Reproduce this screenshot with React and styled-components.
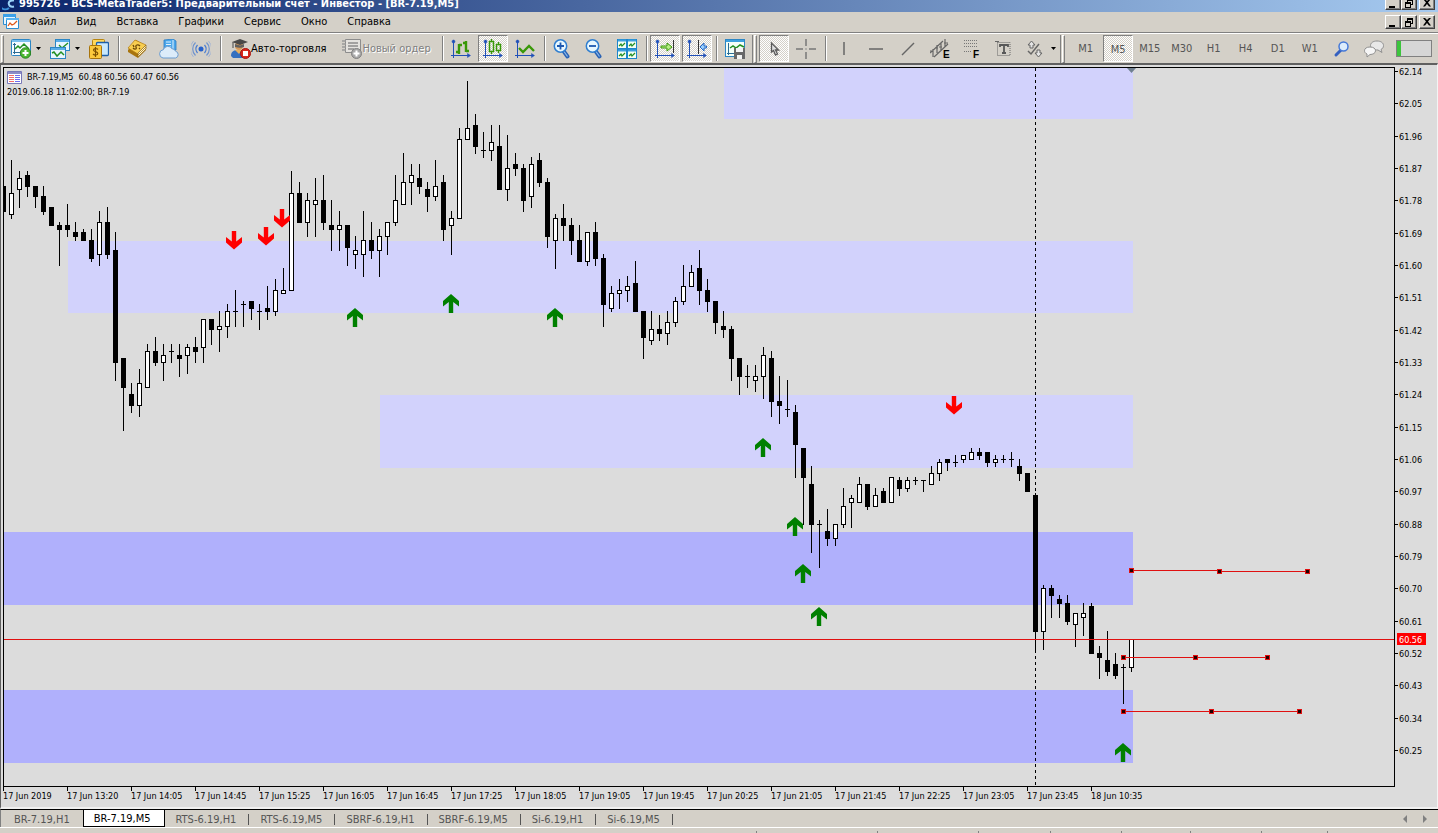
import React from 'react';
import styled, { createGlobalStyle, css } from 'styled-components';

const GlobalStyle = createGlobalStyle`
    * {
        box-sizing: border-box;
    }
    body {
        margin: 0;
        background: #d4d0c8;
        color: #000;
        font-family: 'DejaVu Sans Condensed', 'DejaVu Sans', sans-serif;
        font-size: 11px;
    }
    button {
        font: inherit;
        color: inherit;
    }
`;

const Page = styled.div`
    display: flex;
    flex-direction: column;
    min-height: 100vh;
`;

const TitleBar = styled.header`
    display: flex;
    align-items: flex-end;
    height: 12px;
    overflow: hidden;
    padding: 0 3px 0 2px;
    background: linear-gradient(to right, #0a246a, #a6caf0);
`;

const Title = styled.h1`
    flex: 1;
    margin: 0 0 0 3px;
    color: #fff;
    font-family: 'DejaVu Sans Condensed', 'DejaVu Sans', sans-serif;
    font-size: 11px;
    font-weight: bold;
    line-height: 16px;
    white-space: nowrap;
`;

const MenuBar = styled.nav`
    display: flex;
    align-items: center;
    height: 20px;
    padding: 0 3px;
`;

const MenuItem = styled.button`
    border: 0;
    padding: 0 10px;
    background: none;
    line-height: 18px;
`;

const MenuSpace = styled.div`
    flex: 1;
`;

const WindowButtons = styled.div`
    display: flex;
    margin-bottom: ${props => (props.$title ? '2px' : '0')};
`;

const WindowButton = styled.button`
    display: flex;
    width: 16px;
    height: 14px;
    margin-left: ${props => (props.$apart ? '2px' : '0')};
    padding: 0;
    border: 1px solid;
    border-color: #fff #404040 #404040 #fff;
    background: #d4d0c8;
    box-shadow: inset -1px -1px #808080;
`;

const Toolbar = styled.div`
    display: flex;
    align-items: center;
    height: 31px;
    border-top: 1px solid #808080;
    box-shadow: inset 0 1px #fff;
    padding-top: 1px;
`;

const Group = styled.div`
    display: flex;
    align-items: center;
    gap: 2px;
    height: 28px;
    padding: 0 2px 0 1px;
    border-right: 1px solid #808080;
    &:last-child {
        flex: 1;
        border-right: 0;
    }
`;

const Grip = styled.span`
    width: 3px;
    height: 28px;
    margin-right: ${props => (props.$wide ? '4px' : '0')};
    border: 1px solid;
    border-color: #fff #808080 #808080 #fff;
`;

const Separator = styled.span`
    width: 4px;
    height: 25px;
    border-right: 1px solid #fff;
    box-shadow: inset -1px 0 #808080;
`;

const ToolButton = styled.button`
    display: flex;
    align-items: center;
    justify-content: center;
    width: 30px;
    height: 27px;
    padding: 0;
    border: 1px solid transparent;
    background: none;
    color: #555;
    ${props => props.$pressed && css`
        padding: 1px 0 0 1px;
        border-color: #808080 #fff #fff #808080;
        background: repeating-conic-gradient(#fff 0 25%, #d4d0c8 0 50%) 0 0 / 2px 2px;
    `}
`;

const DropButton = styled(ToolButton)`
    width: 37px;
    justify-content: flex-start;
    padding-left: 4px;
    gap: 5px;
`;

const TextButton = styled(ToolButton)`
    width: auto;
    padding: 0 6px;
    color: #000;
    white-space: nowrap;
    &:disabled {
        color: #808080;
        text-shadow: 1px 1px #fff;
    }
`;

const Meter = styled.progress`
    appearance: none;
    width: 36px;
    height: 17px;
    margin-left: 5px;
    border: 1px solid #808080;
    background: #d6d6d6;
    &::-webkit-progress-bar {
        background: #d6d6d6;
    }
    &::-webkit-progress-value {
        background: #3cc43c;
    }
`;

const ChartWindow = styled.main`
    flex: 1;
    display: grid;
    grid-template-columns: minmax(0, 1fr) 42px;
    grid-template-rows: minmax(0, 1fr) 20px;
    padding: 2px 0 0 2px;
    border-top: 2px solid #606060;
    border-left: 1px solid #606060;
    border-right: 1px solid #f4f4f4;
    border-bottom: 2px solid #f0f0f0;
    background: #dcdcdc;
`;

const Plot = styled.section`
    position: relative;
    display: flex;
    border: 1px solid #000;
`;

const Drawing = styled.svg`
    flex: 1;
    width: 100%;
    height: 100%;
    min-height: 718px;
    shape-rendering: crispEdges;
`;

const Legend = styled.div`
    position: absolute;
    top: 2px;
    left: 3px;
    font-size: 9px;
    line-height: 15px;
    white-space: pre;
`;

const LegendRow = styled.div`
    display: flex;
    align-items: center;
    gap: 5px;
`;

const PriceAxis = styled.svg`
    width: 100%;
    height: 100%;
    font-size: 9px;
    shape-rendering: crispEdges;
`;

const TimeAxis = styled.ol`
    display: flex;
    grid-column: 1 / 3;
    margin: 0;
    padding: 0;
    overflow: hidden;
    list-style: none;
    font-size: 9px;
`;

const TimeMark = styled.li`
    flex: 0 0 64px;
    line-height: 11px;
    white-space: nowrap;
    &::before {
        content: '';
        display: block;
        width: 1px;
        height: 4px;
        background: #000;
    }
`;

const TabBar = styled.nav`
    display: flex;
    height: 18px;
    padding-left: 2px;
    border-top: 1px solid #000;
    border-left: 1px solid #808080;
`;

const Tab = styled.button`
    display: flex;
    align-items: center;
    padding: 1px 0 0 11px;
    border: 0;
    background: none;
    color: #555;
    white-space: nowrap;
    &::after {
        content: '';
        width: 1px;
        height: 11px;
        margin-left: 12px;
        background: ${props => (props.$bare ? 'transparent' : '#555')};
    }
    ${props => props.$active && css`
        padding: 0 0 0 10px;
        border: 1px solid #000;
        border-top: 0;
        background: #fff;
        color: #000;
        &::after {
            background: transparent;
        }
    `}
`;

const TabScroll = styled.div`
    display: flex;
    align-items: center;
    gap: 16px;
    margin-left: auto;
    padding-right: 11px;
`;

const ScrollButton = styled.button`
    display: flex;
    padding: 0;
    border: 0;
    background: none;
`;

const StatusBar = styled.footer`
    display: flex;
    height: 6px;
    padding-top: 3px;
    border-top: 1px solid #fff;
`;

const StatusCell = styled.div`
    flex: ${props => (props.$first ? '1 1 auto' : `0 1 ${props.$size}px`)};
    border-right: 1px solid #808080;
    &:last-child {
        border-right: 0;
    }
`;

// high, body top, body bottom, low, kind (b - down, w - up, d - doji)
const candles = [
    [186, 186, 212, 212, 'b'], [160, 193, 215, 219, 'w'], [171, 178, 190, 208, 'w'], [171, 175, 187, 197, 'b'],
    [186, 186, 197, 208, 'b'], [186, 196, 212, 215, 'b'], [207, 207, 226, 226, 'b'], [222, 225, 230, 266, 'b'],
    [204, 225, 230, 237, 'b'], [222, 232, 237, 241, 'b'], [229, 232, 241, 241, 'b'], [229, 240, 259, 262, 'b'],
    [211, 222, 255, 266, 'w'], [207, 222, 255, 259, 'b'], [232, 250, 363, 381, 'b'], [358, 358, 388, 431, 'b'],
    [383, 394, 406, 413, 'b'], [369, 383, 406, 417, 'w'], [344, 351, 388, 388, 'w'], [337, 351, 363, 366, 'b'],
    [344, 355, 363, 381, 'w'], [344, 351, 352, 363, 'd'], [344, 355, 359, 377, 'b'], [344, 347, 356, 374, 'w'],
    [337, 347, 352, 363, 'b'], [319, 319, 348, 363, 'w'], [319, 319, 330, 345, 'b'], [311, 326, 330, 352, 'w'],
    [304, 311, 327, 338, 'w'], [290, 311, 312, 327, 'd'], [301, 304, 305, 327, 'd'], [301, 301, 309, 320, 'b'],
    [304, 311, 312, 330, 'd'], [286, 308, 312, 320, 'b'], [279, 290, 312, 316, 'w'], [268, 290, 294, 294, 'w'],
    [171, 193, 291, 291, 'w'], [182, 193, 223, 223, 'b'], [193, 200, 223, 237, 'w'], [178, 200, 205, 237, 'w'],
    [175, 200, 223, 230, 'b'], [200, 225, 230, 251, 'b'], [211, 225, 230, 251, 'w'], [225, 225, 248, 266, 'b'],
    [236, 250, 255, 269, 'w'], [211, 240, 255, 277, 'w'], [222, 240, 251, 259, 'b'], [229, 236, 251, 277, 'w'],
    [222, 222, 237, 255, 'w'], [175, 200, 223, 226, 'w'], [153, 182, 205, 205, 'w'], [164, 175, 183, 205, 'w'],
    [164, 178, 187, 194, 'b'], [182, 189, 197, 212, 'b'], [160, 186, 197, 201, 'w'], [175, 182, 230, 241, 'b'],
    [211, 218, 226, 255, 'w'], [128, 139, 219, 219, 'w'], [81, 128, 140, 140, 'w'], [114, 125, 147, 154, 'b'],
    [132, 150, 151, 158, 'd'], [125, 142, 151, 161, 'w'], [125, 146, 190, 190, 'b'], [135, 168, 190, 201, 'w'],
    [153, 164, 169, 176, 'b'], [164, 168, 201, 212, 'b'], [157, 164, 197, 208, 'w'], [153, 160, 183, 187, 'b'],
    [178, 182, 237, 248, 'b'], [214, 218, 241, 269, 'w'], [204, 218, 226, 241, 'b'], [218, 225, 241, 255, 'b'],
    [225, 240, 262, 262, 'b'], [232, 232, 262, 266, 'w'], [222, 232, 259, 266, 'b'], [254, 258, 305, 327, 'b'],
    [286, 293, 309, 312, 'w'], [279, 290, 294, 309, 'w'], [276, 286, 291, 302, 'w'], [261, 283, 312, 312, 'b'],
    [311, 311, 338, 359, 'b'], [311, 329, 341, 345, 'w'], [315, 329, 334, 341, 'b'], [311, 322, 334, 345, 'w'],
    [297, 301, 323, 327, 'w'], [265, 286, 302, 305, 'w'], [265, 272, 287, 287, 'w'], [250, 268, 291, 305, 'b'],
    [279, 290, 302, 312, 'b'], [301, 301, 323, 334, 'b'], [311, 326, 330, 338, 'b'], [326, 329, 359, 381, 'b'],
    [358, 358, 377, 395, 'b'], [365, 376, 377, 388, 'd'], [365, 376, 381, 392, 'w'], [347, 355, 377, 399, 'w'],
    [351, 358, 402, 417, 'b'], [376, 401, 406, 424, 'b'], [380, 409, 410, 417, 'd'], [405, 412, 445, 478, 'b'],
    [448, 448, 478, 525, 'b'], [466, 484, 525, 553, 'b'], [520, 524, 525, 568, 'd'], [509, 531, 539, 546, 'b'],
    [524, 524, 539, 546, 'w'], [488, 506, 525, 528, 'w'], [495, 498, 503, 528, 'w'], [477, 484, 503, 503, 'w'],
    [484, 484, 507, 510, 'b'], [488, 495, 507, 507, 'w'], [488, 491, 503, 503, 'b'], [477, 477, 503, 503, 'w'],
    [477, 480, 489, 496, 'b'], [477, 480, 489, 492, 'w'], [477, 480, 481, 485, 'd'], [480, 480, 481, 492, 'd'],
    [466, 473, 485, 485, 'w'], [459, 462, 474, 481, 'w'], [459, 459, 463, 471, 'b'], [455, 462, 463, 467, 'd'],
    [455, 455, 460, 463, 'w'], [448, 452, 460, 460, 'w'], [448, 452, 456, 460, 'b'], [452, 452, 463, 467, 'b'],
    [455, 459, 463, 467, 'w'], [455, 459, 460, 463, 'd'], [452, 459, 460, 467, 'd'], [459, 466, 474, 481, 'b'],
    [473, 473, 492, 492, 'b'], [493, 495, 632, 650, 'b'], [585, 588, 632, 650, 'w'], [585, 588, 596, 618, 'b'],
    [595, 599, 604, 618, 'b'], [595, 603, 622, 625, 'b'], [613, 613, 625, 647, 'w'], [603, 613, 618, 636, 'w'],
    [603, 606, 654, 654, 'b'], [646, 653, 658, 679, 'b'], [631, 660, 672, 676, 'b'], [653, 664, 676, 679, 'b'],
    [664, 667, 668, 704, 'd'], [639, 639, 668, 672, 'w'],
];

const zones = [
    { x: 724, y: 68, width: 409, height: 51, color: '#d2d2fc' },
    { x: 68, y: 241, width: 1065, height: 72, color: '#d2d2fc' },
    { x: 380, y: 395, width: 753, height: 73, color: '#d2d2fc' },
    { x: 4, y: 532, width: 1129, height: 73, color: '#b0b0fc' },
    { x: 4, y: 690, width: 1129, height: 73, color: '#b0b0fc' },
];

const sellArrows = [[226, 231], [258, 227], [274, 209], [946, 396]];
const buyArrows = [[347, 308], [443, 294], [547, 308], [755, 438], [787, 517], [795, 564], [811, 607], [1115, 743]];

const levels = [
    [[1131, 570], [1219, 571], [1307, 571]],
    [[1123, 657], [1195, 657], [1267, 657]],
    [[1123, 711], [1211, 711], [1299, 711]],
];

const times = [
    '17 Jun 2019', '17 Jun 13:20', '17 Jun 14:05', '17 Jun 14:45', '17 Jun 15:25', '17 Jun 16:05',
    '17 Jun 16:45', '17 Jun 17:25', '17 Jun 18:05', '17 Jun 19:05', '17 Jun 19:45', '17 Jun 20:25',
    '17 Jun 21:05', '17 Jun 21:45', '17 Jun 22:25', '17 Jun 23:05', '17 Jun 23:45', '18 Jun 10:35',
];

const prices = Array.from({ length: 22 }, (_, i) => ({
    label: (62.14 - i * 0.09).toFixed(2),
    y: Math.round(4 + i * 32.33),
}));

const menu = ['Файл', 'Вид', 'Вставка', 'Графики', 'Сервис', 'Окно', 'Справка'];
const frames = ['M1', 'M5', 'M15', 'M30', 'H1', 'H4', 'D1', 'W1'];
const tabs = [
    'BR-7.19,H1', 'BR-7.19,M5', 'RTS-6.19,H1', 'RTS-6.19,M5',
    'SBRF-6.19,H1', 'SBRF-6.19,M5', 'Si-6.19,H1', 'Si-6.19,M5',
];

const Icon = ({ size = 20, children }) => (
    <svg width={size} height={size} viewBox="0 0 20 20" fill="none" aria-hidden="true">{children}</svg>
);

const Caret = () => (
    <svg width="5" height="3" viewBox="0 0 5 3" aria-hidden="true"><path d="M0 0h5L2.5 3z" fill="#000" /></svg>
);

const Axes = () => (
    <g stroke="#2050b8" fill="#2050b8">
        <path d="M2.5 1v18M0 16.500h19" fill="none" />
        <path d="M1 2.500a1.500 1.500 0 0 1 3 0 1.500 1.500 0 0 1-3 0zM16.500 14.500l3 2-3 2z" strokeWidth="0.500" />
    </g>
);

const NewChartIcon = () => (
    <Icon>
        <rect x="0.500" y="0.500" width="19" height="16" rx="1" fill="#f6fcff" stroke="#2c86c4" />
        <path d="M1 1h18v2H1z" fill="#7cc0ee" />
        <path d="M3.500 4v11M2 13.500h14M2 5.500h3" stroke="#2d6d96" />
        <path d="M4 10l3-3 2 2 4-4 5 5" stroke="#239023" strokeWidth="1.500" />
        <circle cx="14.500" cy="14" r="5.200" fill="#4cb830" stroke="#2b8420" />
        <path d="M14.500 11v6M11.500 14h6" stroke="#fff" strokeWidth="2" />
    </Icon>
);

const ProfilesIcon = () => (
    <Icon>
        <rect x="5.500" y="0.500" width="14" height="11" fill="#e8f6fe" stroke="#2c86c4" />
        <path d="M6 1h13v2H6z" fill="#5aaee8" />
        <path d="M9 6l3 3 6-5" stroke="#239023" strokeWidth="1.300" />
        <rect x="0.500" y="8.500" width="15" height="11" fill="#e8f6fe" stroke="#2c86c4" />
        <path d="M1 9h14v2H1z" fill="#5aaee8" />
        <path d="M2 14l2-1 3 4 4-4 3 3" stroke="#239023" strokeWidth="1.500" />
    </Icon>
);

const SymbolsIcon = () => (
    <Icon>
        <rect x="3.500" y="0.500" width="12" height="12" rx="1" fill="#ffd75a" stroke="#b78512" />
        <rect x="7.500" y="3.500" width="12" height="13" rx="1" fill="#c8e8fc" stroke="#1d5fa8" strokeWidth="1.300" />
        <rect x="0.500" y="6.500" width="12" height="13" rx="1" fill="#fcc93c" stroke="#a8740c" />
        <path d="M9 10.500C7.500 8.800 4.300 9.500 4.500 11.300c.2 1.600 4.300 1.200 4.300 3.200 0 1.900-3.300 2-4.800.5M6.500 8v10" stroke="#7c5000" strokeWidth="1.200" />
    </Icon>
);

const MarketIcon = () => (
    <Icon>
        <path d="M1 11L9 1l10 6v4l-8 8-10-6z" fill="#a8740c" />
        <path d="M1 9L8 1l11 5-8 9z" fill="#f8ce50" stroke="#b07a10" strokeWidth="0.700" />
        <path d="M11 14l8-8v4l-8 8z" fill="#fff4c8" stroke="#8f6410" strokeWidth="0.700" />
        <path d="M11 16l8-8" stroke="#a8740c" strokeWidth="0.800" />
        <path d="M6 9c2 2 4 1 3-1s2-3 4-1M6 6l1 2M12 9l1 1" stroke="#6c4804" strokeWidth="1.300" />
    </Icon>
);

const CloudIcon = () => (
    <Icon>
        <path d="M5 1l9-1 3 2v9H5z" fill="#4ba6ea" stroke="#2a7cc4" strokeWidth="0.800" />
        <path d="M7 3h5M7 5.500h5M7 8h5M14 1v9" stroke="#dff2ff" />
        <path d="M4 19a4.200 4.200 0 0 1 .3-8.300 4.800 4.800 0 0 1 8.700-1 3.600 3.600 0 0 1 3.500 2.500 3.500 3.500 0 0 1 0 6.800z" fill="#dcecfa" stroke="#6a9cd0" />
    </Icon>
);

const SignalIcon = () => (
    <Icon>
        <circle cx="10" cy="10" r="2.500" fill="#2862cc" />
        <path d="M6.500 6a6 6 0 0 0 0 8M13.500 6a6 6 0 0 1 0 8" stroke="#4a7cd0" strokeWidth="1.300" />
        <path d="M4.500 3.500a9 9 0 0 0 0 13M15.500 3.500a9 9 0 0 1 0 13" stroke="#6f93ce" strokeWidth="1.200" />
        <path d="M2.500 2a11.500 11.500 0 0 0 0 16M17.500 2a11.500 11.500 0 0 1 0 16" stroke="#a3b4d4" />
    </Icon>
);

const AutoTradeIcon = () => (
    <Icon>
        <circle cx="8" cy="7" r="4" fill="#d89a58" />
        <path d="M0 17c0-5 3-6 8-6s7 2 7 8H2z" fill="#3470c0" />
        <path d="M4 11l4 4 3-4z" fill="#e8b060" />
        <path d="M1 3l8-3 8 3-8 3z" fill="#484848" />
        <path d="M4 5v3c3 1 7 1 9 0V5L9 6.500z" fill="#606060" />
        <path d="M2 3v6" stroke="#484848" />
        <circle cx="14.500" cy="14.500" r="5" fill="#d8261c" stroke="#a81410" />
        <rect x="12" y="12" width="5" height="5" fill="#fff" />
    </Icon>
);

const OrderIcon = () => (
    <Icon>
        <path d="M3.500 0.500h15v13h-15z" fill="#e4e2de" stroke="#8c8c8c" />
        <path d="M6 4h10M6 7h10M6 10h6" stroke="#8c8c8c" strokeWidth="1.300" />
        <path d="M0 2h4M0 5h4M0 8h4M0 11h4" stroke="#999" strokeWidth="1.500" />
        <circle cx="14.500" cy="14.500" r="5" fill="#a8a8a8" stroke="#808080" />
        <path d="M14.500 11.500v6M11.500 14.500h6" stroke="#fff" strokeWidth="2" />
    </Icon>
);

const BarsIcon = () => (
    <Icon><Axes /><path d="M8 5v10M5 13h3M8 6h3M15 2v11M12 4h3M15 12h3" stroke="#399808" strokeWidth="2.400" /></Icon>
);

const CandlesIcon = () => (
    <Icon>
        <Axes />
        <path d="M8.500 0v2M8.500 13v2M15.500 3v2M15.500 12v2" stroke="#399808" strokeWidth="1.300" />
        <path d="M6.500 2.500h4v10h-4zM13.500 5.500h4v6h-4z" stroke="#399808" strokeWidth="1.500" />
    </Icon>
);

const LineIcon = () => (
    <Icon><Axes /><path d="M4 9l4 4 6-6 5 5" stroke="#399808" strokeWidth="2.400" /></Icon>
);

const ZoomIcon = ({ plus }) => (
    <Icon>
        <path d="M10.500 12l4 5.500" stroke="#2a62b4" strokeWidth="4" strokeLinecap="round" />
        <path d="M11 12.500l3.500 5" stroke="#8cbcec" strokeWidth="1.200" />
        <circle cx="7.500" cy="7" r="6.200" fill="#e8f8ff" stroke="#2f7ed0" strokeWidth="1.500" />
        <path d={plus ? 'M4 7h7M7.500 3.500v7' : 'M4 7h7'} stroke="#1c58b0" strokeWidth="1.800" />
    </Icon>
);

const TileIcon = () => (
    <Icon>
        {[[0, 0], [10, 0], [0, 10], [10, 10]].map(([x, y]) => (
            <g key={`${x}-${y}`} transform={`translate(${x} ${y})`}>
                <rect x="0.500" y="0.500" width="9" height="9" fill="#f4fff4" stroke="#1c86cc" />
                <path d="M1 1.500h8" stroke="#3ca0e0" strokeWidth="2" />
                <path d="M2 7l2-2 1 2 3-3" stroke="#239023" strokeWidth="1.200" />
            </g>
        ))}
    </Icon>
);

const ScrollIcon = () => (
    <Icon>
        <Axes />
        <path d="M18.500 1v13" stroke="#333" />
        <path d="M6 7h6V4l5 4-5 4V9H6z" fill="#b8f088" stroke="#399808" />
    </Icon>
);

const ShiftIcon = () => (
    <Icon>
        <Axes />
        <path d="M11.500 1v14" stroke="#333" />
        <path d="M19.500 7H17V4l-4 4 4 4V9h2.500z" fill="#9cd0fc" stroke="#2466c4" />
    </Icon>
);

const TemplateIcon = () => (
    <Icon>
        <rect x="0.500" y="0.500" width="19" height="17" fill="#f4fff8" stroke="#2c86c4" />
        <path d="M1 2h18" stroke="#3ca0e0" strokeWidth="2" />
        <path d="M3.500 4v12M2 14.500h7" stroke="#2d6d96" />
        <path d="M5 9l3-2 3 2 4-3 4 2" stroke="#239023" strokeWidth="1.500" />
        <path d="M9 9h11v11H9z" fill="#686868" />
        <path d="M11 9h7v4h-7zM12 16h5v4h-5z" fill="#f4f4f4" />
    </Icon>
);

const CursorIcon = () => (
    <Icon><path d="M7.500 4v9l2-1.500 2 4.500 2-1-2-4h3z" fill="#e0e0e0" stroke="#585858" strokeWidth="1.300" /></Icon>
);

const CrossIcon = () => (
    <Icon><path d="M10 0v7M10 13v7M0 10h7M13 10h7M9.500 10h1" stroke="#777" strokeWidth="1.500" /></Icon>
);

const StrokeIcon = ({ d }) => (
    <Icon><path d={d} stroke="#666" strokeWidth="1.500" /></Icon>
);

const Letter = ({ x, y, children }) => (
    <text x={x} y={y} fill="#000" fontSize="10" fontWeight="bold" fontFamily="Liberation Sans, sans-serif">{children}</text>
);

const ChannelIcon = () => (
    <Icon>
        <path d="M0 14L13 2M4 18L18 5M3 10v8M7 6v8M11 4v8M15 0v8M0 12h3M5 9h3M9 8h3M14 4h4" stroke="#666" strokeWidth="1.200" />
        <Letter x="13" y="19">E</Letter>
    </Icon>
);

const FiboIcon = () => (
    <Icon>
        <path d="M2 1.500h13M2 4.500h13M2 7.500h13M2 12.500h8" stroke="#777" strokeDasharray="1 1" />
        <Letter x="11" y="19">F</Letter>
    </Icon>
);

const TextIcon = () => (
    <Icon>
        <path d="M3.500 3.500h12.500v13H3.500z" stroke="#666" strokeDasharray="1 1" />
        <path d="M1 2.500h4" stroke="#666" />
        <path d="M6 8V6h8v2M10 6v8M8 14h4" stroke="#585858" strokeWidth="1.800" />
    </Icon>
);

const ArrowsIcon = () => (
    <Icon>
        <path d="M2 6l3.500-4L9 6H7v3H4V6zM9 14l3.500 4 3.500-4h-2v-3h-3v3z" fill="#e4e4e4" stroke="#666" />
        <path d="M2 12l3 3L13 5" stroke="#666" strokeWidth="1.500" />
    </Icon>
);

const SearchIcon = () => (
    <Icon>
        <path d="M4 16l5-5" stroke="#3460c0" strokeWidth="3" strokeLinecap="round" />
        <circle cx="11.500" cy="7.500" r="4.500" fill="#dcecfc" stroke="#4478d8" strokeWidth="1.500" />
    </Icon>
);

const ChatIcon = () => (
    <Icon>
        <path d="M13 2c4 0 6.500 2 6.500 4.500 0 2-1 3.200-2.500 4l1 3-4-2.500c-4.500 0-7.500-2-7.500-4.500S9 2 13 2z" fill="#e8e8e8" stroke="#909090" />
        <path d="M6 8c3.500 0 5.500 1.500 5.500 3.800S9 15.500 6 15.500L3 18v-3C1.300 14.300.5 13 .5 11.800.5 9.500 2.500 8 6 8z" fill="#f6f6f6" stroke="#909090" />
    </Icon>
);

const ChildIcon = () => (
    <svg width="16" height="16" viewBox="0 0 16 16" aria-hidden="true">
        <path d="M0.500 0.500h12v10h-12z" fill="#e8f6ff" stroke="#2c8cd0" />
        <path d="M0 0h13v3H0z" fill="#3ca0e8" />
        <path d="M3.500 4.500h12v10h-12z" fill="#fff" stroke="#2c8cd0" />
        <path d="M3 4h13v2H3z" fill="#5ab4f0" />
        <path d="M5 12l2-3 2 2 2-1 3-3" fill="none" stroke="#e05818" strokeWidth="1.300" />
    </svg>
);

const LogoIcon = () => (
    <svg width="14" height="14" viewBox="0 0 14 14" aria-hidden="true">
        <path d="M6 0a6 6 0 1 0 1 10" fill="none" stroke="#3c90d8" strokeWidth="2" />
        <path d="M12 2.500C8 2 6 4 7 6.500c.5 2 2.500 2.500 5 2" fill="none" stroke="#9cd4f8" strokeWidth="2" />
    </svg>
);

const signs = {
    min: 'M3 9h6v2H3z',
    restore: 'M5 2h6v6H9v3H3V5h2zM6 4v1h3v2h1V4zM4 7v3h4V7z',
    close: 'M3 2h2l2 2 2-2h2L8 5.500 11 9.500H9L7 7 5 9.500H3L6 5.500z',
};

const Controls = ({ title }) => (
    <WindowButtons $title={title}>
        {[['Свернуть', 'min'], ['Восстановить', 'restore'], ['Закрыть', 'close']].map(([label, sign]) => (
            <WindowButton key={sign} aria-label={label} $apart={sign === 'close'}>
                <svg width="14" height="12" viewBox="0 0 14 12" aria-hidden="true">
                    <path d={signs[sign]} fillRule="evenodd" />
                </svg>
            </WindowButton>
        ))}
    </WindowButtons>
);

const Candle = ({ x, data }) => {
    const [high, top, bottom, low, kind] = data;
    return (
        <g>
            <rect x={x} y={high} width="1" height={low - high} />
            <rect x={x - 2} y={top} width="5" height={bottom - top} />
            {kind === 'w' && <rect x={x - 1} y={top + 1} width="3" height={bottom - top - 2} fill="#fff" />}
        </g>
    );
};

const Level = ({ points }) => (
    <g fill="#e01010">
        {points.slice(1).map(([x, y], i) => (
            <rect key={x} x={points[i][0]} y={points[i][1]} width={x - points[i][0]} height="1" />
        ))}
        {points.map(([x, y]) => (
            <g key={x}>
                <rect x={x - 2} y={y - 2} width="5" height="5" />
                <rect x={x - 1} y={y - 1} width="3" height="3" fill="#200000" />
            </g>
        ))}
    </g>
);

const PriceChart = () => (
    <Drawing role="img" aria-label="BR-7.19,M5">
        <g transform="translate(-4 -68)">
            {zones.map(zone => (
                <rect key={zone.y} x={zone.x} y={zone.y} width={zone.width} height={zone.height} fill={zone.color} />
            ))}
            <path d="M1035.500 68V786" stroke="#000" strokeDasharray="3 3" />
            {candles.map((data, i) => <Candle key={i} x={3 + i * 8} data={data} />)}
            <g shapeRendering="auto">
                {sellArrows.map(([x, y]) => (
                    <path key={x} transform={`translate(${x} ${y})`} fill="#f00" d="M8 18.500L0 11.500V6l5.800 4.500V0h4.400v10.500L16 6v5.500z" />
                ))}
                {buyArrows.map(([x, y]) => (
                    <path key={x} transform={`translate(${x} ${y})`} fill="#008000" d="M8 0l8 7v5.500L10.200 8v11H5.800V8L0 12.500V7z" />
                ))}
                <path d="M1127 68h9l-4.500 5z" fill="#708090" />
            </g>
            {levels.map((points, i) => <Level key={i} points={points} />)}
        </g>
        <rect x="0" y="571" width="100%" height="1" fill="#e01010" />
    </Drawing>
);

const App = () => {
    return (
        <Page>
            <GlobalStyle />
            <TitleBar>
                <LogoIcon />
                <Title>995726 - BCS-MetaTrader5: Предварительный счет - Инвестор - [BR-7.19,M5]</Title>
                <Controls title />
            </TitleBar>
            <MenuBar>
                <ChildIcon />
                {menu.map(item => <MenuItem key={item}>{item}</MenuItem>)}
                <MenuSpace />
                <Controls />
            </MenuBar>
            <Toolbar>
                <Group>
                    <Grip />
                    <DropButton aria-label="Новый график"><NewChartIcon /><Caret /></DropButton>
                    <DropButton aria-label="Профили"><ProfilesIcon /><Caret /></DropButton>
                    <ToolButton aria-label="Символы"><SymbolsIcon /></ToolButton>
                    <Separator />
                    <ToolButton aria-label="Маркет"><MarketIcon /></ToolButton>
                    <ToolButton aria-label="Облако"><CloudIcon /></ToolButton>
                    <ToolButton aria-label="Сигналы"><SignalIcon /></ToolButton>
                    <Separator />
                    <TextButton><AutoTradeIcon />Авто-торговля</TextButton>
                    <TextButton disabled><OrderIcon />Новый ордер</TextButton>
                    <Separator />
                    <ToolButton aria-label="Бары"><BarsIcon /></ToolButton>
                    <ToolButton aria-label="Свечи" $pressed><CandlesIcon /></ToolButton>
                    <ToolButton aria-label="Линия"><LineIcon /></ToolButton>
                    <Separator />
                    <ToolButton aria-label="Увеличить"><ZoomIcon plus /></ToolButton>
                    <ToolButton aria-label="Уменьшить"><ZoomIcon /></ToolButton>
                    <ToolButton aria-label="Окна мозаикой"><TileIcon /></ToolButton>
                    <Separator />
                    <ToolButton aria-label="Автопрокрутка" $pressed><ScrollIcon /></ToolButton>
                    <ToolButton aria-label="Сдвиг графика" $pressed><ShiftIcon /></ToolButton>
                    <Separator />
                    <ToolButton aria-label="Шаблоны"><TemplateIcon /></ToolButton>
                </Group>
                <Group>
                    <Grip />
                    <ToolButton aria-label="Курсор" $pressed><CursorIcon /></ToolButton>
                    <ToolButton aria-label="Перекрестие"><CrossIcon /></ToolButton>
                    <Separator />
                    <ToolButton aria-label="Вертикальная линия"><StrokeIcon d="M10 3v13" /></ToolButton>
                    <ToolButton aria-label="Горизонтальная линия"><StrokeIcon d="M3 10h14" /></ToolButton>
                    <ToolButton aria-label="Трендовая линия"><StrokeIcon d="M4 16L16 4" /></ToolButton>
                    <ToolButton aria-label="Канал"><ChannelIcon /></ToolButton>
                    <ToolButton aria-label="Фибоначчи"><FiboIcon /></ToolButton>
                    <ToolButton aria-label="Текст"><TextIcon /></ToolButton>
                    <DropButton aria-label="Стрелки"><ArrowsIcon /><Caret /></DropButton>
                </Group>
                <Group>
                    <Grip $wide />
                    {frames.map(frame => (
                        <ToolButton key={frame} $pressed={frame === 'M5'}>{frame}</ToolButton>
                    ))}
                    <ToolButton aria-label="Поиск"><SearchIcon /></ToolButton>
                    <ToolButton aria-label="Чат"><ChatIcon /></ToolButton>
                    <Meter aria-label="Соединение" value="14" max="100" />
                </Group>
            </Toolbar>
            <ChartWindow>
                <Plot>
                    <PriceChart />
                    <Legend>
                        <LegendRow>
                            <svg width="15" height="13" viewBox="0 0 15 13" aria-hidden="true">
                                <path d="M0.500 0.500h14v12H.5z" fill="#fff" stroke="#7878b8" />
                                <path d="M1 1h13v2H1z" fill="#8c8cc8" />
                                <path d="M2 4.500h5M2 6.500h5M2 8.500h5M2 10.500h5" stroke="#f06c6c" />
                                <path d="M8 4.500h5M8 6.500h5M8 8.500h5M8 10.500h5" stroke="#6c6cf0" />
                            </svg>
                            <span>BR-7.19,M5  60.48 60.56 60.47 60.56</span>
                        </LegendRow>
                        <div>2019.06.18 11:02:00; BR-7.19</div>
                    </Legend>
                </Plot>
                <PriceAxis>
                    {prices.map(({ label, y }) => (
                        <g key={label}>
                            <rect x="0" y={y} width="3" height="1" />
                            <text x="4" y={y + 4}>{label}</text>
                        </g>
                    ))}
                    <rect x="2" y="566" width="29" height="12" fill="#f00" />
                    <text x="4" y="576" fill="#fff">60.56</text>
                </PriceAxis>
                <TimeAxis>
                    {times.map(time => <TimeMark key={time}>{time}</TimeMark>)}
                </TimeAxis>
            </ChartWindow>
            <TabBar>
                {tabs.map((tab, i) => <Tab key={tab} $active={i === 1} $bare={i === 0}>{tab}</Tab>)}
                <TabScroll>
                    <ScrollButton aria-label="Назад">
                        <svg width="4" height="8" viewBox="0 0 4 8"><path d="M4 0v8L0 4z" fill="#808080" /></svg>
                    </ScrollButton>
                    <ScrollButton aria-label="Вперед">
                        <svg width="4" height="8" viewBox="0 0 4 8"><path d="M0 0v8l4-4z" fill="#808080" /></svg>
                    </ScrollButton>
                </TabScroll>
            </TabBar>
            <StatusBar>
                <StatusCell $first />
                {[121, 101, 72, 71, 69, 71, 66, 110].map((size, i) => <StatusCell key={i} $size={size} />)}
            </StatusBar>
        </Page>
    );
};

export default App;
